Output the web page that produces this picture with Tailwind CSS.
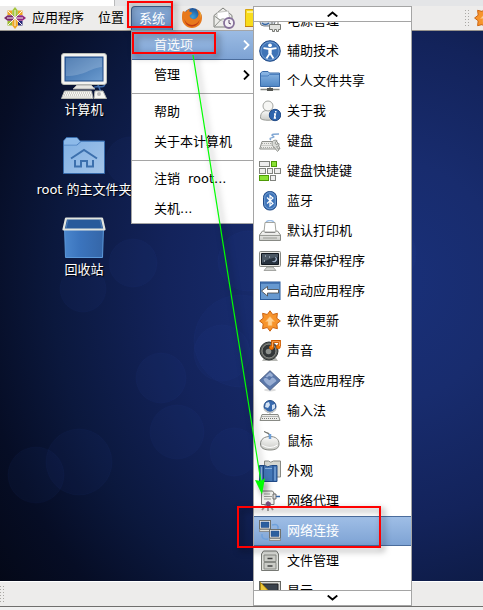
<!DOCTYPE html>
<html lang="zh-CN">
<head>
<meta charset="utf-8">
<meta name="viewport" content="width=device-width, initial-scale=1">
<title>桌面</title>
<script src="https://cdn.jsdelivr.net/npm/@tailwindcss/browser@4"></script>
</head>
<body class="relative flex h-screen flex-col overflow-hidden bg-[#e4e5e7] font-['DejaVu_Sans','Noto_Sans_CJK_SC',sans-serif] text-[13px] leading-[18px] text-black">

<svg width="0" height="0" class="absolute" aria-hidden="true">
  <defs>
    <linearGradient id="blue" x1="0" y1="0" x2="0" y2="1"><stop offset="0" stop-color="#8fb9e6"/><stop offset="1" stop-color="#4f87c4"/></linearGradient>
    <linearGradient id="folder" x1="0" y1="0" x2="1" y2="1"><stop offset="0" stop-color="#7fb0e4"/><stop offset="1" stop-color="#a4c4e8"/></linearGradient>
    <linearGradient id="grey" x1="0" y1="0" x2="0" y2="1"><stop offset="0" stop-color="#fbfbfa"/><stop offset="1" stop-color="#c9cac6"/></linearGradient>
    <linearGradient id="screen" x1="0" y1="0" x2="1" y2="1"><stop offset="0" stop-color="#2f64a3"/><stop offset="1" stop-color="#6d9ccf"/></linearGradient>
    <linearGradient id="bin" x1="0" y1="0" x2="1" y2="0"><stop offset="0" stop-color="#4a86cd"/><stop offset=".4" stop-color="#3b74bd"/><stop offset="1" stop-color="#3566a8"/></linearGradient>
    <radialGradient id="fox"><stop offset="0" stop-color="#3aa0dc"/><stop offset="1" stop-color="#1c4f93"/></radialGradient>
    <symbol id="star" viewBox="0 0 22 22"><path d="M11 .8l2.700 3.700 4.700-1.200-.6 4.900 3.600 2.800-3.600 2.800.6 4.900-4.700-1.200L11 21.200l-2.700-3.700-4.700 1.200.6-4.900L.6 11l3.600-2.800-.6-4.900 4.700 1.200z" fill="#f7942c" stroke="#cc6412"/><path d="M11 6.500l4.500 5h-2.500v4h-4v-4h-2.500z" fill="#ffd293" stroke="#fab663" stroke-width=".6"/></symbol>
    <symbol id="pc" viewBox="0 0 12 12"><rect x=".5" y=".5" width="11" height="8.500" fill="#f1f1ee" stroke="#70716d"/><rect x="2" y="2" width="8" height="5.500" fill="#2c5f9f" stroke="#204a87" stroke-width=".5"/><path d="M1 9.500h10l.8 2H.2z" fill="#deded8" stroke="#777" stroke-width=".7"/></symbol>
  </defs>
</svg>

<div class="flex h-1.5 shrink-0"><div class="w-[115px] border-r border-[#b9babb] bg-white"></div></div>

<header class="flex h-[25px] shrink-0 items-stretch border-b border-[#97938c] bg-[#edeceb]">
  <nav class="flex min-w-0 flex-1 items-stretch" aria-label="面板">
    <button class="flex items-center gap-1.5 pl-1 pr-[7px]">
      <svg class="size-[22px]" viewBox="0 0 22 22" aria-hidden="true">
        <path d="M11 0l2.800 3.500V9L11 11 8.200 9V3.500z" fill="#a4c43c"/><path d="M22 11l-3.500 2.800H13L11 11l2-2.800h5.500z" fill="#922a80"/><path d="M11 22l-2.800-3.500V13L11 11l2.800 2v5.500z" fill="#efa724"/><path d="M0 11l3.500-2.800H9L11 11l-2 2.800H3.500z" fill="#7a2a6c"/>
        <path d="M14 8V3.500h4.500V8z" fill="#efa724"/><path d="M14 14h4.500v4.500H14z" fill="#262577"/><path d="M8 14v4.500H3.500V14z" fill="#9bbb2c"/><path d="M8 8H3.500V3.500H8z" fill="#efa724"/>
        <path d="M4 4l14 14M18 4L4 18M11 3v16M3 11h16" stroke="#f5f3ee" stroke-width="1"/>
      </svg>
      应用程序
    </button>
    <button class="px-[7px]">位置</button>
    <button class="rounded-t-sm border border-b-0 border-[#41618f] bg-linear-to-b from-[#87a9d4] to-[#6d93c5] px-[7px] text-white" aria-expanded="true">系统</button>
    <div class="flex items-center gap-2.5 pl-2">
      <button aria-label="Firefox">
        <svg class="size-[22px]" viewBox="0 0 22 22" aria-hidden="true"><circle cx="11.500" cy="10" r="9" fill="url(#fox)"/><path d="M2 4c1 .5 2 1 3 .7C6 3 7.500 2 9 2c-.7 1-.8 2-.4 2.800 1 .3 2 .5 2.600 1-.3 1.400-1.700 1.800-2.700 2.800.5 2 2 3.600 4 3.600 2.500.2 4.500-2 5-4.700-.2-2.500-1-4-2.500-5.500 4 1.700 6 5 6 8.700 0 6-4.500 10.300-10 10.300S1 16.500 1 11c0-2.500 0-5 1-7z" fill="#e8791c"/><path d="M3.500 12c1 4 5 6.500 9 5.800 3-.6 5-2.500 6-5-.5 4-4 7-8 6.700-4-.3-6.800-3.500-7-7.500z" fill="#c13a12"/><path d="M18 3.500c2 2.500 2.400 5 1.700 8 .2-3-.5-5.800-1.700-8z" fill="#fcd04a"/></svg>
      </button>
      <button aria-label="邮件">
        <svg class="size-[22px]" viewBox="0 0 22 22" aria-hidden="true"><path d="M1 8.500l9-7.500 9 7.500V20H1z" fill="#ecece9" stroke="#7f817c"/><path d="M4 5.500L15.500 4l1 6.500-6 4L4 11z" fill="#fff" stroke="#b2b3af" stroke-width=".7"/><path d="M1.500 19.500l7-7.500h3l7 7.500M1.500 9l6 4.500" fill="none" stroke="#92948f"/><circle cx="16" cy="16" r="5" fill="#f4f1f6" stroke="#85709a" stroke-width="1.800"/><path d="M16 13v3.300l2 .7" fill="none" stroke="#5a4668"/></svg>
      </button>
      <button aria-label="便笺">
        <svg class="size-[22px]" viewBox="0 0 22 22" aria-hidden="true"><path d="M.5 2.500h20v17H.5z" fill="#f8dc1c" stroke="#d6a514"/><path d="M2 4h17v2H2z" fill="#fdf08a"/><path d="M0 19.500h21" stroke="#c17d11"/></svg>
      </button>
    </div>
  </nav>
  <div class="flex w-5 shrink-0 items-center gap-1 overflow-hidden pl-0.5">
    <svg class="h-[17px] w-[5px] shrink-0" viewBox="0 0 5 17" aria-hidden="true"><path d="M.5 0v17M3.500 0v17" stroke="#aaa8a4" stroke-dasharray="1 2"/></svg>
    <button class="shrink-0" aria-label="更新"><svg class="size-[22px]" aria-hidden="true"><use href="#star"/></svg></button>
  </div>
</header>

<main class="relative min-h-0 flex-1 overflow-hidden bg-[radial-gradient(ellipse_450px_480px_at_390px_250px,#193079_0%,#182c6e_25%,#13235b_50%,#0b183d_75%,#060d25_92%,#03050e_118%)]">
  <svg class="absolute inset-0 size-full" aria-hidden="true">
    <g fill="#2b50b4" fill-opacity=".06" stroke="#4468c8" stroke-opacity=".04">
      <circle cx="83" cy="258" r="23"/><circle cx="133" cy="232" r="24"/><circle cx="130" cy="130" r="24"/><circle cx="222" cy="322" r="28"/><circle cx="240" cy="310" r="46"/><circle cx="161" cy="347" r="25"/><circle cx="177" cy="401" r="27"/><circle cx="234" cy="421" r="24"/><circle cx="79" cy="431" r="33"/><circle cx="36" cy="444" r="28"/><circle cx="248" cy="230" r="30"/><circle cx="385" cy="223" r="31"/>
    </g>
  </svg>
  <div class="relative flex w-[168px] flex-col gap-3 pt-[21px] text-center leading-5 whitespace-nowrap text-white [text-shadow:1px_1px_1px_#000]">
    <a href="#" class="flex flex-col items-center">
      <svg class="size-12" viewBox="0 0 48 48" aria-hidden="true">
        <path d="M33 36c4-3 9 0 11-2s-3-3-6-1l3 7" fill="none" stroke="#3f6cab" stroke-width="1.500"/>
        <rect x="1.500" y="1.500" width="45" height="31" rx="2.500" fill="#f3f3f0" stroke="#babdb6"/><rect x="5" y="5" width="38" height="24" fill="url(#screen)" stroke="#204a87"/><path d="M6 6h36v9C30 16 25 24 6 24z" fill="#fff" opacity=".18"/>
        <path d="M17 33h14l4 4H13z" fill="#e6e6e2" stroke="#aaa"/><path d="M4.500 39h27l1.500 7.500H1.500zM35 39h8l3.500 7.500H34z" fill="#f6f6f2" stroke="#b4b6b0"/><path d="M5 41h26M4 43h28M3.500 45h28" stroke="#aaa9a3" stroke-dasharray="1 1"/><circle cx="39" cy="42" r="2" fill="#bbb"/>
      </svg>计算机</a>
    <a href="#" class="flex flex-col items-center">
      <svg class="size-12" viewBox="0 0 48 48" aria-hidden="true">
        <path d="M3.500 41.500V9l3-3.500H17l3 3.500h24.500v32.500z" fill="url(#folder)" stroke="#376bab"/><path d="M4 13h13l4-3.500h23" fill="none" stroke="#4e83c2"/><path d="M4 12.500V9l3-3h10l2.500 3-3 3.500z" fill="#8dbae9"/>
        <path d="M11 26.500L24 18l13 8.500M15 28v6.500h6V29h6v5.500h6V28" fill="none" stroke="#3c70ad" stroke-width="2"/>
      </svg>root 的主文件夹</a>
    <a href="#" class="flex flex-col items-center">
      <svg class="size-12" viewBox="0 0 48 48" aria-hidden="true">
        <path d="M4.500 15h39l-1 30.500h-37z" fill="url(#bin)" stroke="#5c99da"/><path d="M6 6.500h36l2.500 11h-41z" fill="#285a9b" stroke="#e2e5df" stroke-width="2.200" stroke-linejoin="round"/><path d="M8 8l-2 8M40 8l2 8" stroke="#4a7ab5"/>
      </svg>回收站</a>
  </div>
</main>

<footer class="flex h-[25px] shrink-0 items-center border-t border-white bg-[#edeceb]">
  <svg class="h-[17px] w-[5px]" viewBox="0 0 5 17" aria-hidden="true"><path d="M.5 0v17M3.500 0v17" stroke="#aaa8a4" stroke-dasharray="1 2"/></svg>
</footer>
<div class="h-1 shrink-0 border-t border-[#706f6d] bg-[#f0f0f0]"></div>

<!-- System menu -->
<div role="menu" aria-label="系统" class="absolute left-[131px] top-[30px] w-[123px] border border-[#a5a5a5] bg-white">
  <button role="menuitem" class="flex h-[29px] w-full items-center justify-between border-b border-[#4a6c9c] bg-linear-to-b from-[#9bbbe3] to-[#7ea3d4] pl-[22px] pr-[3px] text-white">首选项
    <svg class="h-2.5 w-[7px]" viewBox="0 0 7 10" aria-hidden="true"><path d="M1 .5L5.500 5 1 9.500" fill="none" stroke="#fff" stroke-width="1.800"/></svg></button>
  <button role="menuitem" class="flex h-[30px] w-full items-center justify-between pl-[22px] pr-[3px]">管理
    <svg class="h-2.5 w-[7px]" viewBox="0 0 7 10" aria-hidden="true"><path d="M1 .5L5.500 5 1 9.500" fill="none" stroke="#000" stroke-width="1.800"/></svg></button>
  <hr class="my-[3px] border-[#a5a5a5]">
  <button role="menuitem" class="flex h-[30px] w-full items-center pl-[22px]">帮助</button>
  <button role="menuitem" class="flex h-[30px] w-full items-center whitespace-nowrap pl-[22px]">关于本计算机</button>
  <hr class="my-[3px] border-[#a5a5a5]">
  <button role="menuitem" class="flex h-[30px] w-full items-center gap-2 whitespace-nowrap pl-[22px]"><span>注销</span><span>root...</span></button>
  <button role="menuitem" class="flex h-[29px] w-full items-center pl-[22px]">关机...</button>
</div>

<!-- Preferences submenu -->
<div role="menu" aria-label="首选项" class="absolute bottom-1 left-[253px] top-1.5 flex w-[159px] flex-col border border-[#a5a5a5] bg-white">
  <button class="flex h-[15px] shrink-0 items-center justify-center border-b border-[#a5a5a5]" aria-label="向上滚动"><svg class="h-1.5 w-[11px]" viewBox="0 0 11 6" aria-hidden="true"><path d="M.7 5.500l4.800-4 4.800 4" fill="none" stroke="#000" stroke-width="1.800"/></svg></button>
  <div class="flex min-h-0 flex-1 flex-col overflow-hidden *:flex *:h-[30px] *:shrink-0 *:items-center *:gap-1.5 *:whitespace-nowrap *:pl-[5px] [&_svg]:size-[22px]">
    <button role="menuitem" class="-mt-4"><svg viewBox="0 0 22 22" aria-hidden="true"><rect x="1" y="2" width="15" height="14" rx="4" fill="#cfd6de" stroke="#7b8087"/><path d="M3 13q3 3 7 0" stroke="#3465a4" fill="none" stroke-width="1.500"/><path d="M10.500 14.500h11v5h-2v2h-2v-2h-2v2h-2v-2h-3zM13 14v-3M19 14v-3" fill="#e1e2df" stroke="#777974"/></svg>电源管理</button>
    <button role="menuitem"><svg viewBox="0 0 22 22" aria-hidden="true"><circle cx="11" cy="11" r="10.300" fill="#3f74b7" stroke="#204a87"/><circle cx="11" cy="11" r="9" fill="none" stroke="#7ba5d8" stroke-width=".8"/><circle cx="11" cy="5.300" r="1.900" fill="#fff"/><path d="M4.500 8.200L11 9l6.500-.8M11 9v4l-3.500 5.500M11 13l3.500 5.500" fill="none" stroke="#fff" stroke-width="1.800"/><path d="M9.300 8.500h3.400v5H9.300z" fill="#fff"/></svg>辅助技术</button>
    <button role="menuitem"><svg viewBox="0 0 22 22" aria-hidden="true"><path d="M1.500 16.500V3l2-1.500H9L10.500 3H20.500v13.500z" fill="url(#blue)" stroke="#3a6ba8"/><path d="M2 6h7l1.500-1.500H20" fill="none" stroke="#4c80bf"/><path d="M11 17v3M1.500 19.500h19" stroke="#888a85" stroke-width="1.500"/><path d="M8 18h6v3H8z" fill="#555753"/></svg>个人文件共享</button>
    <button role="menuitem"><svg viewBox="0 0 22 22" aria-hidden="true"><path d="M1.500 18c0-5 2-7.500 7-7.500s8 2.500 8 7.500c0 3-15 3-15 0z" fill="url(#grey)" stroke="#9a9c98"/><circle cx="9" cy="6" r="5" fill="#f6f6f4" stroke="#a5a7a3"/><circle cx="16" cy="15" r="5.700" fill="#2e65ad" stroke="#204a87"/><path d="M16.800 11v1.500M15 14h1.300l-.8 4H17" fill="none" stroke="#fff" stroke-width="1.500"/></svg>关于我</button>
    <button role="menuitem"><svg viewBox="0 0 22 22" aria-hidden="true"><path d="M12 10c-4-3 6-2 2-4s4-2 6-2" fill="none" stroke="#80a7d4" stroke-width="1.300"/><path d="M3 11.500h15l3 7.500H.7z" fill="#ebebe8" stroke="#8d8f8a"/><path d="M3 13.500h12M2.500 15.500h13M2 17.500h14" stroke="#a9aba6" stroke-dasharray="1 1"/><path d="M13 13c0-2.500 3-3.500 5-2.500l-2 2.500 1 1.500 3-1c.5 2-1 3.500-2.500 3.200l2.500 3.300-1.500 1.500-3.500-4.500c-1 0-2-2-2-4z" fill="#d9dbd7" stroke="#888a85" stroke-width=".8"/></svg>键盘</button>
    <button role="menuitem"><svg viewBox="0 0 22 22" aria-hidden="true"><g fill="#eee" stroke="#81837e"><rect x=".5" y="1.500" width="10" height="5"/><rect x=".5" y="8.500" width="6" height="5"/><rect x="8.500" y="8.500" width="5" height="5"/><rect x="15.500" y="8.500" width="6" height="5"/><rect x="11.500" y="15.500" width="5" height="5"/></g><g fill="#8ae234" stroke="#4e9a06"><rect x="12.500" y="1.500" width="5" height="5"/><rect x=".5" y="15.500" width="9" height="5"/></g></svg>键盘快捷键</button>
    <button role="menuitem"><svg viewBox="0 0 22 22" aria-hidden="true"><rect x="4.500" y="1.500" width="13" height="18.500" rx="6" fill="#3d73b8" stroke="#204a87"/><rect x="5.700" y="2.700" width="10.600" height="16" rx="5" fill="none" stroke="#80aadb" stroke-width=".8"/><path d="M8 7.500l6 6-3 2.500V5.500L14 8l-6 5.500" fill="none" stroke="#fff" stroke-width="1.200"/></svg>蓝牙</button>
    <button role="menuitem"><svg viewBox="0 0 22 22" aria-hidden="true"><path d="M7 2q4-3 8 0" fill="none" stroke="#9dbfe6" stroke-width="1.500"/><path d="M3.500 11h15l3 4v5.500H.5V15z" fill="url(#grey)" stroke="#888a85"/><path d="M6 2.500h10l1 9.500H5z" fill="#fff" stroke="#a2a49f"/><path d="M1 15.500h20M4 18h14" stroke="#999b96"/><path d="M6 12.500h10" stroke="#888"/></svg>默认打印机</button>
    <button role="menuitem"><svg viewBox="0 0 22 22" aria-hidden="true"><rect x=".5" y="1.500" width="21" height="15" rx="1" fill="#e7e7e3" stroke="#888a85"/><path d="M2.500 3.500h17v11h-17z" fill="#27323e" stroke="#111820"/><path d="M3 4h16v3Q10 8 3 13z" fill="#64717e" opacity=".6"/><path d="M16.500 7c1.500 2.500-.5 5-3 4.500 3.500 1.500 5.500-2 3-4.500z" fill="#b9cbe4" stroke="#b9cbe4" stroke-width=".5"/><path d="M6 6h1M10 7h1M5 11h1" stroke="#cdd8e4"/><path d="M8 17h6l3 3.500H5z" fill="#d2d3cf" stroke="#888a85" stroke-width=".7"/></svg>屏幕保护程序</button>
    <button role="menuitem"><svg viewBox="0 0 22 22" aria-hidden="true"><rect x="1.500" y="2" width="19.500" height="17.500" fill="#6799d0" stroke="#2d5d9b"/><path d="M2 3h18.500" stroke="#3a6aa8" stroke-width="1.500"/><path d="M2.500 11l6-4.500v3h11v3.500h-11v3z" fill="#fff" stroke="#444" stroke-width=".8"/></svg>启动应用程序</button>
    <button role="menuitem"><svg aria-hidden="true"><use href="#star"/></svg>软件更新</button>
    <button role="menuitem"><svg viewBox="0 0 22 22" aria-hidden="true"><path d="M5 18h12l2 3H3z" fill="#b7b8b4"/><circle cx="10" cy="11" r="9" fill="#555753" stroke="#2e3436"/><circle cx="10" cy="11" r="7" fill="#323638" stroke="#a2a49f" stroke-width=".8"/><circle cx="9.500" cy="11.500" r="2.800" fill="#8b8f8c"/><path d="M13.500 7V1.500h7V6" fill="none" stroke="#ce5c00" stroke-width="2.800"/><circle cx="12.500" cy="7.500" r="2" fill="#f57900" stroke="#ce5c00"/><circle cx="19.300" cy="6.700" r="2" fill="#f57900" stroke="#ce5c00"/><path d="M13.500 7V1.700h7V6" fill="none" stroke="#fba75a"/></svg>声音</button>
    <button role="menuitem"><svg viewBox="0 0 22 22" aria-hidden="true"><ellipse cx="11" cy="20" rx="6" ry="1.500" fill="#ddd"/><path d="M11 .7L21.300 10.500 11 20.300.7 10.500z" fill="#5b78aa" stroke="#4b5f87"/><path d="M11 2.200l3 2.800-1 2-3-1-2 1.500-1.500-1zM4.500 9c2-2 4-1 5 .5s2 0 3-1.500 3 0 4 1.500l1 1.500-6.500 5C9 15 5 12 4.500 9z" fill="#a5b7da" opacity=".85"/></svg>首选应用程序</button>
    <button role="menuitem"><svg viewBox="0 0 22 22" aria-hidden="true"><circle cx="11" cy="6.500" r="6" fill="#3769ae" stroke="#274e87"/><path d="M7 3l3-1 1 3-2 3-3-1zM13 5l3-1v4l-3 2z" fill="#d3e1f3"/><path d="M5 9q6 7 12 0M11 12v2.500" fill="none" stroke="#c1c5c7" stroke-width="1.500"/><path d="M3 14.500h16l2 6H1z" fill="#ecece9" stroke="#888a85"/><path d="M3.500 16.500h15M3 18.500h16" stroke="#777975" stroke-dasharray="1 1"/></svg>输入法</button>
    <button role="menuitem"><svg viewBox="0 0 22 22" aria-hidden="true"><path d="M5.500 1c0 3 5 0 5 5" fill="none" stroke="#777974" stroke-width="1.200"/><path d="M1.500 14c0-5 4-7.500 9.500-7.500s9 2.500 9 7.500c0 4-3 6-9 6s-9.500-2-9.500-6z" fill="url(#grey)" stroke="#888a85"/><path d="M3 15q8 5 15.500 0" fill="none" stroke="#fff"/><path d="M11 4v5" stroke="#6d9fd8" stroke-width="2.500"/></svg>鼠标</button>
    <button role="menuitem"><svg viewBox="0 0 22 22" aria-hidden="true"><path d="M5.500 1h4q2 2.500 5 0h7v16H5.500z" fill="#d5d7d1" stroke="#888a85"/><path d="M.5 5.500h5q3 2.500 7 0h5.500v16H.5z" fill="#4478b8" stroke="#204a87"/><path d="M4.500 6v15M14 6v15" fill="none" stroke="#204a87"/><path d="M2.500 7v13.500M16 7v13.500M6 8.500h7" fill="none" stroke="#8db2de"/></svg>外观</button>
    <button role="menuitem"><svg viewBox="0 0 22 22" aria-hidden="true"><path d="M2.500 1h11l1.500 2v11.500H2.500z" fill="#f2f2ef" stroke="#777974"/><path d="M5 4h6M5 6.500h8M5 9h7" stroke="#9b9d98"/><path d="M14 4h3v5h-3z" fill="#ddd" stroke="#555" stroke-width=".8"/><path d="M17 6.500h4" stroke="#3465a4" stroke-width="1.500"/><path d="M7 15l-4 5M10.500 15l3.500 5M9 15v6" stroke="#a5a29f" stroke-width="1.800"/><path d="M6.500 13l2.500-2 3 2-1 3H7.500z" fill="#75507b"/></svg>网络代理</button>
    <button role="menuitem" class="border-y border-[#4a6c9c] bg-linear-to-b from-[#9fbee6] to-[#7ea3d4] text-white"><svg viewBox="0 0 22 22" aria-hidden="true"><path d="M13 5q7-2 6 4M3 14q-1 6 6 5" fill="none" stroke="#6fa1dc" stroke-width="1.500"/><use href="#pc" x="0" y="0" width="12" height="12"/><use href="#pc" x="10" y="9" width="12" height="12"/></svg>网络连接</button>
    <button role="menuitem"><svg viewBox="0 0 22 22" aria-hidden="true"><path d="M2.500 4l2-3h13l2 3v16.500h-17z" fill="#dfe0dc" stroke="#777974"/><path d="M5 5h12v6.500H5zM5 12.500h12V19H5z" fill="#cbccc7" stroke="#888a85"/><path d="M8.500 8.500h5M8.500 16h5" stroke="#444" stroke-width="1.600"/></svg>文件管理</button>
    <button role="menuitem"><svg viewBox="0 0 22 22" aria-hidden="true"><rect x=".5" y="1.500" width="21" height="16" fill="#d8d9d4" stroke="#666864"/><path d="M3 4h16v11H3z" fill="#39414a" stroke="#222"/><path d="M1.500 2.500L13 14.500V19H1.500z" fill="#edc83a" stroke="#a8820c"/></svg>显示</button>
  </div>
  <button class="flex h-[15px] shrink-0 items-center justify-center border-t border-[#a5a5a5]" aria-label="向下滚动"><svg class="h-1.5 w-[11px]" viewBox="0 0 11 6" aria-hidden="true"><path d="M.7.500l4.800 4 4.800-4" fill="none" stroke="#000" stroke-width="1.800"/></svg></button>
</div>

<!-- Annotations -->
<svg class="pointer-events-none absolute inset-0 size-full [filter:drop-shadow(3px_3px_3px_rgb(0_0_0/0.5))]" aria-hidden="true">
  <path d="M193 55L261 482" stroke="#0f0" stroke-width="1.200"/>
  <path d="M255 480l6 1 4-3-3 16.500z" fill="#0f0"/>
  <g fill="none" stroke="#f00" stroke-width="2"><rect x="128" y="2" width="44" height="25"/><rect x="133" y="33" width="82" height="20"/><rect x="238" y="507" width="142" height="40"/></g>
</svg>
</body>
</html>
